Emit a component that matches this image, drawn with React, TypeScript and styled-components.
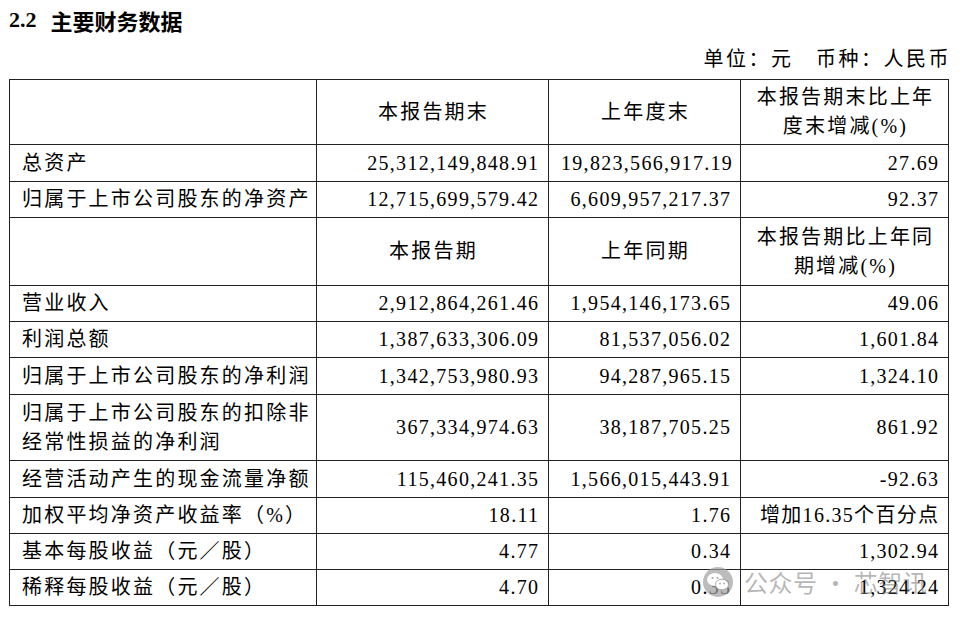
import React from "react";
import styled, { createGlobalStyle } from "styled-components";

const Global = createGlobalStyle`
  html, body { margin: 0; padding: 0; background: #fff; }
  body { font-family: "Liberation Serif", "Noto Sans CJK SC", serif; color: #000; }
`;

const Page = styled.div`
  position: relative;
  width: 960px;
  height: 618px;
  padding: 6px 12px 0 9px;
  box-sizing: border-box;
  overflow: hidden;
`;

const Title = styled.h2`
  margin: 0;
  font-size: 22px;
  line-height: 28px;
  font-weight: 700;
  display: flex;
  gap: 14px;
  font-family: "Liberation Serif", "Noto Sans CJK SC", serif;
`;

const TitleCn = styled.span`
  font-family: "Noto Sans CJK SC", sans-serif;
  font-weight: 700;
`;

const Unit = styled.div`
  margin-top: 10px;
  margin-right: -3px;
  text-align: right;
  font-size: 20px;
  line-height: 30px;
  font-family: "Liberation Serif", "Noto Sans CJK SC", serif;
  letter-spacing: 2.5px;
`;

const Table = styled.table`
  margin-top: 5px;
  width: 940px;
  border-collapse: collapse;
  table-layout: fixed;
  font-size: 20px;
`;

const Cell = styled.td<{ $align?: "left" | "right" | "center"; $h: number }>`
  border: 1px solid #222;
  height: ${(p) => p.$h}px;
  padding: 0 ${(p) => (p.$align === "left" || p.$align === "center" ? "10px" : "8.7px")} 0 12px;
  text-align: ${(p) => p.$align || "right"};
  vertical-align: middle;
  line-height: 29px;
  font-family: "Liberation Serif", "Noto Sans CJK SC", serif;
  letter-spacing: ${(p) => (p.$align === "left" || p.$align === "center" ? "2.2px" : "1.3px")};
  white-space: nowrap;
`;

const Watermark = styled.div`
  position: absolute;
  left: 703px;
  top: 564px;
  display: flex;
  align-items: center;
  gap: 7px;
  font-family: "Noto Sans CJK SC", sans-serif;
  font-size: 24px;
  letter-spacing: 0.5px;
  color: rgba(110, 110, 110, 0.5);
  pointer-events: none;
`;

type Row = { label: React.ReactNode; a: string; b: string; c: string; h: number };

const top: Row[] = [
  { label: "总资产", a: "25,312,149,848.91", b: "19,823,566,917.19", c: "27.69", h: 36 },
  { label: "归属于上市公司股东的净资产", a: "12,715,699,579.42", b: "6,609,957,217.37", c: "92.37", h: 35 },
];

const bottom: Row[] = [
  { label: "营业收入", a: "2,912,864,261.46", b: "1,954,146,173.65", c: "49.06", h: 35 },
  { label: "利润总额", a: "1,387,633,306.09", b: "81,537,056.02", c: "1,601.84", h: 35 },
  { label: "归属于上市公司股东的净利润", a: "1,342,753,980.93", b: "94,287,965.15", c: "1,324.10", h: 36 },
  {
    label: (
      <>
        归属于上市公司股东的扣除非
        <br />
        经常性损益的净利润
      </>
    ),
    a: "367,334,974.63",
    b: "38,187,705.25",
    c: "861.92",
    h: 65,
  },
  { label: "经营活动产生的现金流量净额", a: "115,460,241.35", b: "1,566,015,443.91", c: "-92.63", h: 36 },
  { label: "加权平均净资产收益率（%）", a: "18.11", b: "1.76", c: "增加16.35个百分点", h: 35 },
  { label: "基本每股收益（元／股）", a: "4.77", b: "0.34", c: "1,302.94", h: 35 },
  { label: "稀释每股收益（元／股）", a: "4.70", b: "0.33", c: "1,324.24", h: 35 },
];

const DataRow = ({ r }: { r: Row }) => (
  <tr>
    <Cell $align="left" $h={r.h}>{r.label}</Cell>
    <Cell $h={r.h}>{r.a}</Cell>
    <Cell $h={r.h}>{r.b}</Cell>
    <Cell $h={r.h}>{r.c}</Cell>
  </tr>
);

const WeChatIcon = () => (
  <svg width="34" height="30" viewBox="0 0 34 30">
    <circle cx="15" cy="15" r="15" fill="rgba(160,160,160,0.7)" />
    <ellipse cx="12" cy="12.5" rx="8" ry="6.5" fill="#fff" />
    <ellipse cx="19" cy="17.5" rx="6.5" ry="5.3" fill="#fff" stroke="rgba(160,160,160,0.9)" strokeWidth="1" />
    <circle cx="9.5" cy="11" r="1.1" fill="rgba(160,160,160,0.9)" />
    <circle cx="14.5" cy="11" r="1.1" fill="rgba(160,160,160,0.9)" />
    <circle cx="17" cy="16.5" r="0.9" fill="rgba(160,160,160,0.9)" />
    <circle cx="21" cy="16.5" r="0.9" fill="rgba(160,160,160,0.9)" />
  </svg>
);

export default function App() {
  return (
    <>
      <Global />
      <Page>
        <Title>
          <span>2.2</span>
          <TitleCn>主要财务数据</TitleCn>
        </Title>
        <Unit>单位：元　币种：人民币</Unit>
        <Table>
          <colgroup>
            <col style={{ width: 307 }} />
            <col style={{ width: 232 }} />
            <col style={{ width: 192 }} />
            <col style={{ width: 208 }} />
          </colgroup>
          <tbody>
            <tr>
              <Cell $align="left" $h={64} />
              <Cell $align="center" $h={64}>本报告期末</Cell>
              <Cell $align="center" $h={64}>上年度末</Cell>
              <Cell $align="center" $h={64}>
                本报告期末比上年
                <br />
                度末增减(%)
              </Cell>
            </tr>
            {top.map((r, i) => (
              <DataRow key={i} r={r} />
            ))}
            <tr>
              <Cell $align="left" $h={67} />
              <Cell $align="center" $h={67}>本报告期</Cell>
              <Cell $align="center" $h={67}>上年同期</Cell>
              <Cell $align="center" $h={67}>
                本报告期比上年同
                <br />
                期增减(%)
              </Cell>
            </tr>
            {bottom.map((r, i) => (
              <DataRow key={i} r={r} />
            ))}
          </tbody>
        </Table>
        <Watermark>
          <WeChatIcon />
          <span>公众号 · 芯智讯</span>
        </Watermark>
      </Page>
    </>
  );
}
